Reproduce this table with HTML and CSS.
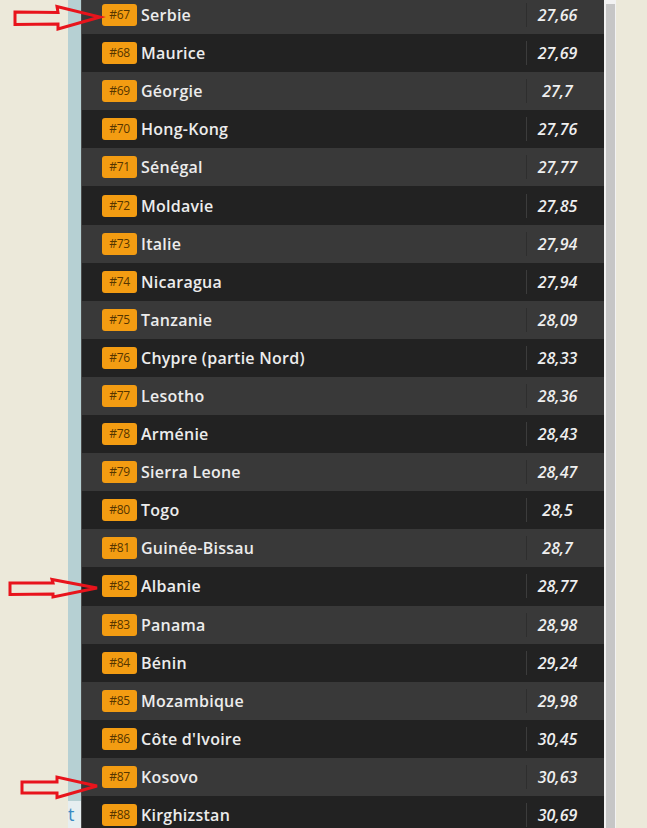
FILE: index.html
```html
<!DOCTYPE html>
<html lang="fr">
<head>
<meta charset="utf-8">
<title>Classement</title>
<link rel="stylesheet" href="styles.css">
</head>
<body>
<div class="page">
  <div class="gutter"></div>
  <div class="strip">
    <div class="strip-top"></div>
    <div class="strip-bottom"><span class="link">t</span></div>
  </div>
  <div class="table">
    <div class="row light"><span class="badge">#67</span><span class="name">Serbie</span><span class="val">27,66</span></div>
    <div class="row dark"><span class="badge">#68</span><span class="name">Maurice</span><span class="val">27,69</span></div>
    <div class="row light"><span class="badge">#69</span><span class="name">Géorgie</span><span class="val">27,7</span></div>
    <div class="row dark"><span class="badge">#70</span><span class="name">Hong-Kong</span><span class="val">27,76</span></div>
    <div class="row light"><span class="badge">#71</span><span class="name">Sénégal</span><span class="val">27,77</span></div>
    <div class="row dark"><span class="badge">#72</span><span class="name">Moldavie</span><span class="val">27,85</span></div>
    <div class="row light"><span class="badge">#73</span><span class="name">Italie</span><span class="val">27,94</span></div>
    <div class="row dark"><span class="badge">#74</span><span class="name">Nicaragua</span><span class="val">27,94</span></div>
    <div class="row light"><span class="badge">#75</span><span class="name">Tanzanie</span><span class="val">28,09</span></div>
    <div class="row dark"><span class="badge">#76</span><span class="name">Chypre (partie Nord)</span><span class="val">28,33</span></div>
    <div class="row light"><span class="badge">#77</span><span class="name">Lesotho</span><span class="val">28,36</span></div>
    <div class="row dark"><span class="badge">#78</span><span class="name">Arménie</span><span class="val">28,43</span></div>
    <div class="row light"><span class="badge">#79</span><span class="name">Sierra Leone</span><span class="val">28,47</span></div>
    <div class="row dark"><span class="badge">#80</span><span class="name">Togo</span><span class="val">28,5</span></div>
    <div class="row light"><span class="badge">#81</span><span class="name">Guinée-Bissau</span><span class="val">28,7</span></div>
    <div class="row dark"><span class="badge">#82</span><span class="name">Albanie</span><span class="val">28,77</span></div>
    <div class="row light"><span class="badge">#83</span><span class="name">Panama</span><span class="val">28,98</span></div>
    <div class="row dark"><span class="badge">#84</span><span class="name">Bénin</span><span class="val">29,24</span></div>
    <div class="row light"><span class="badge">#85</span><span class="name">Mozambique</span><span class="val">29,98</span></div>
    <div class="row dark"><span class="badge">#86</span><span class="name">Côte d'Ivoire</span><span class="val">30,45</span></div>
    <div class="row light"><span class="badge">#87</span><span class="name">Kosovo</span><span class="val">30,63</span></div>
    <div class="row dark"><span class="badge">#88</span><span class="name">Kirghizstan</span><span class="val">30,69</span></div>
  </div>
  <div class="scrollcol"><div class="thumb"></div></div>
  <div class="rest"></div>
  <svg class="arrows" width="647" height="828" viewBox="0 0 647 828">
    <polygon points="15,12 58,12.5 57,6.5 100,17 58,29 58,24 15,24.5"/>
    <polygon points="10,583 53,583 52,579.5 97,588 53,597 53,594 10,594.5"/>
    <polygon points="22,782 57,782 57,777 97,786 57,797.5 57,793 22,793"/>
  </svg>
</div>
</body>
</html>
```
FILE: styles.css
```css
html, body {
  margin: 0;
  padding: 0;
}
body {
  background: #ece9da;
  overflow: hidden;
  width: 647px;
  height: 828px;
}
.page {
  position: relative;
  display: flex;
  width: 647px;
  height: 828px;
  overflow: hidden;
}
.gutter {
  width: 68px;
  flex: none;
  background: #ece9da;
}
.strip {
  width: 13px;
  flex: none;
  display: flex;
  flex-direction: column;
}
.strip-top {
  flex: 1;
  background: #b6d0d3;
}
.strip-bottom {
  height: 27px;
  background: #e6eef0;
  font-family: "Open Sans", sans-serif;
  font-size: 18px;
  line-height: 26px;
  color: #3a8bc2;
  overflow: hidden;
}
.link {
  display: block;
  margin-left: 0;
}
.table {
  width: 522px;
  flex: none;
  border-left: 1px solid #4a4a4a;
  background: #222222;
  margin-top: -4px;
  font-family: "Open Sans", sans-serif;
}
.row {
  height: 38.1px;
  display: flex;
  align-items: center;
  padding-left: 20px;
}
.row.light { background: #393939; }
.row.dark { background: #222222; }
.badge {
  width: 35px;
  height: 22px;
  flex: none;
  background: #f39c12;
  border-radius: 3px;
  color: #553500;
  font-size: 12px;
  line-height: 22px;
  text-align: center;
  letter-spacing: -0.3px;
}
.name {
  flex: 1;
  margin-left: 4px;
  color: #ececec;
  font-weight: 600;
  font-size: 16px;
  letter-spacing: 0.25px;
}
.val {
  width: 61px;
  height: 24px;
  flex: none;
  padding-right: 16px;
  box-sizing: content-box;
  border-left: 1px solid #3c3c3c;
  color: #efefef;
  font-weight: 600;
  font-style: italic;
  font-size: 16px;
  line-height: 24px;
  text-align: center;
}
.row.light .val { border-left-color: #2e2e2e; }
.scrollcol {
  width: 12px;
  flex: none;
  background: #f2f2f2;
  padding-top: 4px;
  padding-left: 2px;
  box-sizing: border-box;
}
.thumb {
  width: 9px;
  height: 100%;
  background: #c6c6c6;
}
.rest {
  flex: 1;
  background: #ece9da;
}
.arrows {
  position: absolute;
  left: 0;
  top: 0;
  pointer-events: none;
}
.arrows polygon {
  fill: none;
  stroke: #e8141c;
  stroke-width: 3;
  stroke-linejoin: miter;
}
```
